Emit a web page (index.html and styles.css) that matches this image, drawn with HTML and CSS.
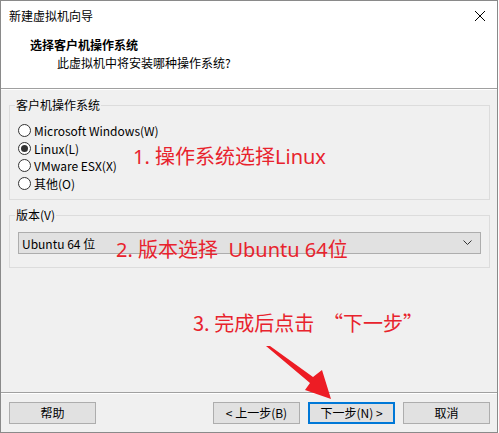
FILE: index.html
```html
<!DOCTYPE html>
<html lang="zh-CN">
<head>
<meta charset="utf-8">
<title>新建虚拟机向导</title>
<link rel="stylesheet" href="styles.css">
</head>
<body>
<div class="window">
  <div class="header">
    <div class="titlebar">
      <span class="title">新建虚拟机向导</span>
      <svg class="close" width="12" height="12" viewBox="0 0 12 12"><path d="M1 1L11 11M11 1L1 11" stroke="#000" stroke-width="1" fill="none"/></svg>
    </div>
    <div class="heading">选择客户机操作系统</div>
    <div class="subheading">此虚拟机中将安装哪种操作系统?</div>
  </div>
  <div class="content">
    <fieldset class="group group-os">
      <legend>客户机操作系统</legend>
      <div class="radio-row"><span class="radio"></span><span>Microsoft Windows(W)</span></div>
      <div class="radio-row"><span class="radio checked"></span><span>Linux(L)</span></div>
      <div class="radio-row"><span class="radio"></span><span>VMware ESX(X)</span></div>
      <div class="radio-row"><span class="radio"></span><span>其他(O)</span></div>
    </fieldset>
    <fieldset class="group group-ver">
      <legend>版本(V)</legend>
      <div class="select">
        <span>Ubuntu 64 位</span>
        <svg class="chev" width="9" height="6" viewBox="0 0 9 6"><path d="M0.5 0.5L4.5 4.5L8.5 0.5" stroke="#333" stroke-width="1" fill="none"/></svg>
      </div>
    </fieldset>
  </div>
  <div class="footer">
    <button class="btn">帮助</button>
    <div class="spacer"></div>
    <button class="btn">&lt; 上一步(B)</button>
    <button class="btn default">下一步(N) &gt;</button>
    <button class="btn">取消</button>
  </div>

  <div class="note note1 latin">1. 操作系统选择Linux</div>
  <div class="note note2 latin">2. 版本选择&nbsp; Ubuntu 64位</div>
  <div class="note note3">3. 完成后点击 &nbsp;“下一步”</div>
  <svg class="arrow" width="499" height="433" viewBox="0 0 499 433">
    <polygon points="266,346 270,346 313,377 322,370 331,399 305,390 310,383" fill="#ed1c24"/>
  </svg>
</div>
</body>
</html>
```
FILE: styles.css
```css
* { box-sizing: border-box; }
html, body { margin: 0; padding: 0; background: #fff; }
body {
  font-family: "Noto Sans CJK SC", "Noto Sans", sans-serif;
  font-size: 12px;
  color: #000;
}
.window {
  position: relative;
  width: 498px;
  height: 433px;
  border: 1px solid #8a8a8a;
  background: #f0f0f0;
  display: flex;
  flex-direction: column;
}
.header {
  background: #fff;
  height: 88px;
  border-bottom: 1px solid #a0a0a0;
  flex: none;
}
.titlebar {
  height: 29px;
  display: flex;
  align-items: center;
  justify-content: space-between;
  padding: 0 8px 0 8px;
}
.title { line-height: 16px; }
.close { margin-right: 3px; }
.heading {
  font-weight: bold;
  line-height: 16px;
  padding-left: 29px;
  margin-top: 7px;
}
.subheading {
  line-height: 16px;
  padding-left: 56px;
  margin-top: 2px;
}
.content {
  border-top: 1px solid #fff;
  padding: 7px 7px 0 8px;
  flex: 1;
}
.group {
  margin: 0;
  border: 1px solid #dcdcdc;
  padding: 0 8px;
  min-inline-size: 0;
}
.group legend {
  padding: 0 1px;
  margin-left: -3px;
  line-height: 16px;
}
.group-os { padding-top: 9px; padding-bottom: 7px; }
.radio-row {
  height: 17.5px;
  display: flex;
  align-items: center;
  gap: 3px;
}
.radio {
  width: 13px;
  height: 13px;
  border-radius: 50%;
  border: 1px solid #333;
  background: #fff;
  display: flex;
  align-items: center;
  justify-content: center;
  flex: none;
}
.radio.checked::after {
  content: "";
  width: 7px;
  height: 7px;
  border-radius: 50%;
  background: #333;
}
.group-ver {
  margin-top: 7px;
  padding-top: 9px;
  padding-bottom: 13px;
}
.select {
  height: 22px;
  background: #e1e1e1;
  border: 1px solid #adadad;
  display: flex;
  align-items: center;
  justify-content: space-between;
  padding: 0 8px 0 3px;
}
.footer {
  flex: none;
  border-top: 1px solid #a0a0a0;
  box-shadow: inset 0 1px 0 #fff;
  display: flex;
  gap: 8px;
  padding: 9px 7px 8px 8px;
}
.spacer { flex: 1; }
.btn {
  width: 87px;
  height: 22px;
  background: #e1e1e1;
  border: 1px solid #adadad;
  font: inherit;
  color: #000;
  padding: 0;
  line-height: 18px;
}
.btn.default { border: 2px solid #0078d7; }
.note {
  position: absolute;
  color: #e8232d;
  font-size: 20px;
  line-height: 24px;
  white-space: nowrap;
}
.note.latin { font-family: "Noto Sans", "Noto Sans CJK SC", sans-serif; }
.note1 { left: 132px; top: 144px; }
.note2 { left: 115px; top: 237px; }
.note3 { left: 192px; top: 310px; }
.arrow { position: absolute; left: -1px; top: -1px; pointer-events: none; }
```
